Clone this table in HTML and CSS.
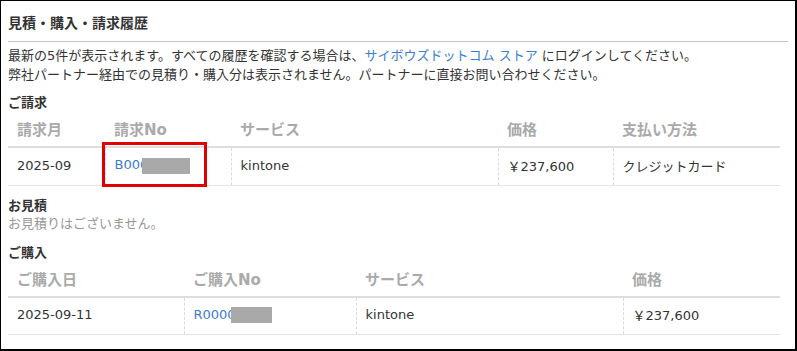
FILE: index.html
```html
<!DOCTYPE html>
<html lang="ja">
<head>
<meta charset="utf-8">
<link rel="stylesheet" href="styles.css">
</head>
<body>
<div class="frame">
  <h2 class="title">見積・購入・請求履歴</h2>
  <p class="desc">最新の5件が表示されます。すべての履歴を確認する場合は、<a class="link" href="#">サイボウズドットコム ストア</a> にログインしてください。<br>弊社パートナー経由での見積り・購入分は表示されません。パートナーに直接お問い合わせください。</p>

  <h3 class="sub sub-first">ご請求</h3>
  <table class="grid">
    <colgroup><col class="c97"><col class="c126"><col class="c267"><col class="c115"><col class="c167"></colgroup>
    <thead>
      <tr><th>請求月</th><th>請求No</th><th>サービス</th><th>価格</th><th>支払い方法</th></tr>
    </thead>
    <tbody>
      <tr>
        <td>2025-09</td>
        <td class="mark-cell"><a class="link" href="#">B000</a><span class="redact redact-b"></span><span class="highlight"></span></td>
        <td>kintone</td>
        <td>￥237,600</td>
        <td>クレジットカード</td>
      </tr>
    </tbody>
  </table>

  <h3 class="sub sub-est">お見積</h3>
  <p class="empty">お見積りはございません。</p>

  <h3 class="sub sub-buy">ご購入</h3>
  <table class="grid">
    <colgroup><col class="c176"><col class="c172"><col class="c267"><col class="c157"></colgroup>
    <thead>
      <tr><th>ご購入日</th><th>ご購入No</th><th>サービス</th><th>価格</th></tr>
    </thead>
    <tbody>
      <tr>
        <td>2025-09-11</td>
        <td><a class="link" href="#">R0000</a><span class="redact redact-r"></span></td>
        <td>kintone</td>
        <td>￥237,600</td>
      </tr>
    </tbody>
  </table>
</div>
</body>
</html>
```

FILE: styles.css
```css
* { box-sizing: border-box; }
html, body { margin: 0; padding: 0; background: #fff; }
body {
  font-family: "DejaVu Sans", "Noto Sans CJK JP", sans-serif;
  color: #333;
  font-size: 13px;
}
.frame {
  width: 797px;
  height: 351px;
  border-style: solid;
  border-color: #000;
  border-width: 1px 2px 2px 1px;
  padding: 0 7px 0 7px;
  overflow: hidden;
}
.title {
  margin: 0;
  padding: 12px 0 8px;
  font-size: 14px;
  line-height: 20px;
  font-weight: bold;
  border-bottom: 1px solid #c4c4c4;
}
.desc {
  margin: 4px 0 0;
  line-height: 19px;
  font-size: 13px;
}
.link { color: #3b7dcf; text-decoration: none; }
.sub {
  margin: 0;
  font-size: 13px;
  line-height: 19px;
  font-weight: bold;
}
.sub-first { margin-top: 9px; }
.sub-est { margin-top: 10px; }
.sub-buy { margin-top: 10px; }
.empty {
  margin: 0;
  color: #999;
  line-height: 18px;
}
.grid {
  width: 772px;
  border-collapse: collapse;
  table-layout: fixed;
}
.c97 { width: 97px; } .c126 { width: 126px; } .c267 { width: 267px; }
.c115 { width: 115px; } .c167 { width: 167px; } .c176 { width: 176px; }
.c172 { width: 172px; } .c157 { width: 157px; }
.grid th {
  text-align: left;
  color: #aaa;
  font-size: 15px;
  font-weight: bold;
  height: 35px;
  padding: 0 8px 1px 9px;
  border-bottom: 2px solid #ddd;
  vertical-align: middle;
}
.grid td {
  height: 38px;
  padding: 0 8px 2px 9px;
  border-bottom: 1px solid #e6e6e6;
  border-left: 1px dashed #dcdcdc;
  vertical-align: middle;
  white-space: nowrap;
}
.grid td:first-child { border-left: none; }
.redact {
  display: inline-block;
  height: 16px;
  background: #a9a9a9;
  vertical-align: middle;
}
.redact-b { width: 48px; margin-left: -6px; }
.redact-r { width: 41px; margin-left: -5px; }
.mark-cell { position: relative; }
.highlight {
  position: absolute;
  left: -4px;
  top: -6px;
  width: 105px;
  height: 45px;
  border: 3px solid #e00000;
}
```
